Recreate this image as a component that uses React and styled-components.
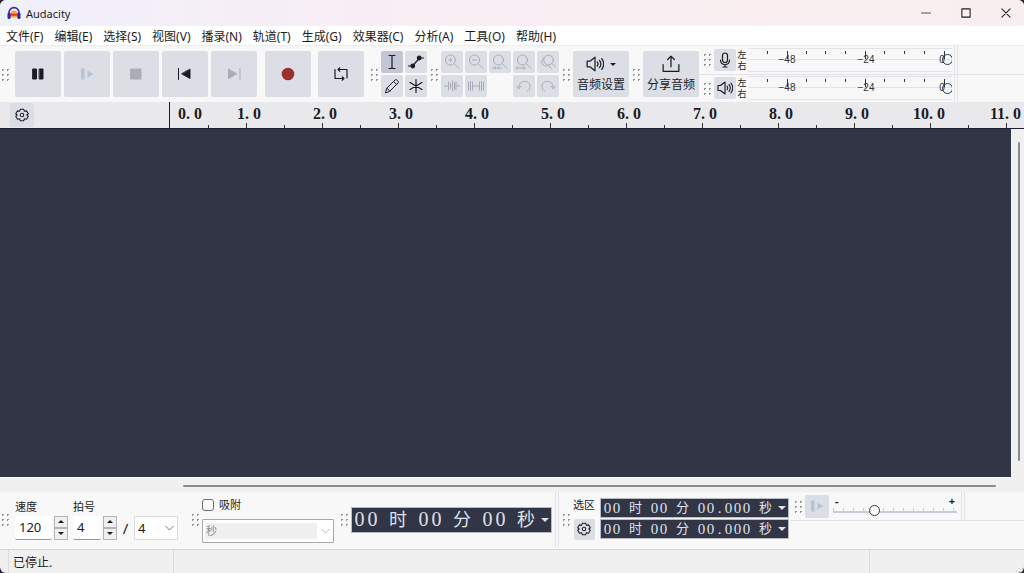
import { useState } from "react"
import styled, { createGlobalStyle, css } from "styled-components"

const GlobalStyle = createGlobalStyle`
  * { box-sizing: border-box; }
  body {
    margin: 0;
    background: #2b2433;
    color: #1c1c1c;
    font-family: "Noto Sans", "Noto Sans CJK SC", sans-serif;
    font-size: 12px;
  }
  button, input, select {
    font: inherit;
    color: inherit;
    margin: 0;
    padding: 0;
  }
  svg { display: block; flex: none; }
`

const Window = styled.div`
  display: flex;
  flex-direction: column;
  min-height: 100vh;
  border-radius: 6px;
  overflow: hidden;
  background: #f0f0f0;
`

const TitleBar = styled.header`
  display: flex;
  align-items: center;
  height: 26px;
  padding: 0 12px 0 7px;
  background: linear-gradient(90deg, #f0f0fa, #f7eef6 30%, #faeef0 75%, #f8eef0);
`

const Title = styled.h1`
  flex: 1;
  margin: 0 0 0 5px;
  font-size: 11px;
  font-weight: normal;
`

const WindowButtons = styled.div`
  display: flex;
  gap: 28px;
`

const PlainButton = styled.button`
  display: flex;
  align-items: center;
  justify-content: center;
  border: 0;
  background: none;
`

const MenuBar = styled.nav`
  display: flex;
  gap: 11px;
  height: 19px;
  padding-left: 6px;
  background: #ffffff;
  line-height: 22px;
`

const MenuLink = styled.a`
  color: #1c1c1c;
  text-decoration: none;
  white-space: nowrap;
`

const Toolbar = styled.div`
  display: flex;
  height: 57px;
  background: #f8f8f9;
  border-top: 1px solid #ececee;
`

const Group = styled.div`
  display: flex;
  align-items: center;
  gap: ${(p) => p.$gap || 0}px;
  margin-right: ${(p) => p.$after || 0}px;
`

const Grip = styled.span`
  flex: none;
  align-self: center;
  width: 10px;
  height: 15px;
  margin: ${(p) => (p.$edge ? "0 5px 0 0" : "0 2px")};
  background: radial-gradient(circle, #8f9199 1px, transparent 1px) 0 0 / 5px 5px;
`

const ToolButton = styled.button`
  display: flex;
  flex-direction: column;
  align-items: center;
  justify-content: center;
  gap: 4px;
  flex: none;
  width: ${(p) => p.$w || 22}px;
  height: ${(p) => p.$h || 22}px;
  border: 0;
  border-radius: 2px;
  background: ${(p) => (p.$active ? "#c3c6d4" : "#dcdee5")};
  color: ${(p) => (p.disabled ? "#a9abb6" : "#1c1c24")};
  line-height: 16px;
`

const ToolGrid = styled.div`
  display: grid;
  grid-template-columns: repeat(${(p) => p.$cols}, 22px);
  gap: 2px;
  align-content: center;
`

const Meters = styled.div`
  flex: 1;
  display: flex;
  flex-direction: column;
`

const MeterRow = styled.div`
  display: flex;
  align-items: center;
  flex: 1;
  padding-left: 1px;
  & + & {
    border-top: 1px solid #e2e3e8;
  }
`

const Channels = styled.span`
  width: 12px;
  text-align: center;
  font-size: 9px;
  line-height: 11px;
`

const MeterEnd = styled.span`
  align-self: stretch;
  width: 4px;
  margin-left: 2px;
  border: 1px solid #e2e3e8;
  border-width: 0 1px;
`

const MeterBox = styled.div`
  position: relative;
  width: 204px;
  height: 24px;
  overflow: hidden;
`

const round = css`
  appearance: none;
  width: 11px;
  height: 11px;
  border: 1px solid #33353d;
  border-radius: 50%;
`

const MeterSlider = styled.input`
  position: absolute;
  inset: 0 -1px 0 auto;
  width: 100%;
  appearance: none;
  background: transparent;
  &::-webkit-slider-thumb {
    ${round}
    background: transparent;
  }
`

const RulerRow = styled.div`
  display: flex;
  height: 27px;
  background: #e9e9ec;
  border-bottom: 1px solid #1d2030;
`

const RulerHead = styled.div`
  flex: none;
  display: flex;
  align-items: center;
  width: 170px;
  padding-left: 10px;
  border-right: 1px solid #1c1c24;
`

const Ruler = styled.div`
  flex: 1;
  display: flex;
  overflow: hidden;
  font: bold 16px/24px "Liberation Serif", serif;
`

const Second = styled.div`
  flex: 0 0 ${(p) => (p.$first ? 38 : 76)}px;
  padding-left: ${(p) => (p.$first ? 0 : 21)}px;
  background: ${(p) =>
    p.$first
      ? "none"
      : "linear-gradient(#333, #333) 0 100% / 1px 3px no-repeat, linear-gradient(#333, #333) 50% 100% / 1px 5px no-repeat"};
  & > span {
    display: block;
    width: 32px;
    text-align: right;
  }
`

const Dot = styled.span`
  display: inline-block;
  width: 8px;
  text-align: left;
`

const TrackArea = styled.main`
  flex: 1;
  display: grid;
  grid-template-columns: 1fr 13px;
  grid-template-rows: 1fr 15px;
`

const Canvas = styled.div`
  background: #313545;
`

const ScrollV = styled.div`
  padding: 13px 4px 16px 7px;
  & > div {
    height: 100%;
    background: #8a8a8a;
    border-radius: 1px;
  }
`

const ScrollH = styled.div`
  padding: 7px 15px 6px 183px;
  border-top: 1px solid #fafafa;
  & > div {
    height: 2px;
    background: #8a8a8a;
    border-radius: 1px;
  }
`

const Footer = styled.div`
  display: flex;
  height: 58px;
  padding-bottom: 2px;
  background: #f8f8f9;
  border-bottom: 1px solid #d5d5d8;
`

const Stack = styled.div`
  display: flex;
  flex-direction: column;
  justify-content: center;
  align-items: ${(p) => p.$align || "flex-start"};
  gap: ${(p) => p.$gap || 0}px;
  padding-bottom: ${(p) => p.$lift || 0}px;
`

const FieldLabel = styled.label`
  font-size: 11px;
  line-height: 16px;
  white-space: nowrap;
`

const Row = styled.div`
  display: flex;
  align-items: center;
  gap: 2px;
  height: 24px;
`

const NumberInput = styled.input`
  width: ${(p) => p.$w}px;
  height: 24px;
  padding-left: 4px;
  border: 0;
  border-bottom: 1px solid #9a9a9a;
  border-radius: 2px;
  background: #ffffff;
  font-size: 13px;
`

const Spin = styled.div`
  display: flex;
  flex-direction: column;
  button {
    display: flex;
    align-items: center;
    justify-content: center;
    width: 14px;
    height: 12px;
    border: 1px solid #b4b4b4;
    background: #f0f0f0;
  }
`

const Slash = styled.span`
  width: 13px;
  text-align: center;
  font-size: 15px;
`

const SelectWrap = styled.div`
  display: grid;
  align-items: center;
  width: ${(p) => p.$w}px;
  & > * {
    grid-area: 1 / 1;
  }
  svg {
    justify-self: end;
    margin-right: 4px;
    pointer-events: none;
  }
`

const Select = styled.select`
  appearance: none;
  width: 100%;
  height: 24px;
  padding-left: 3px;
  border: 1px solid ${(p) => (p.disabled ? "#a8a8a8" : "#d9d9d9")};
  border-radius: 1px;
  background: ${(p) =>
    p.disabled ? "linear-gradient(#f0f0f0, #f0f0f0) 2px 50% / 112px 16px no-repeat #fff" : "#fff"};
  color: ${(p) => (p.disabled ? "#8c8c8c" : "#1c1c1c")};
  opacity: 1;
  font-size: ${(p) => (p.disabled ? 11 : 13)}px;
`

const Check = styled.input`
  appearance: none;
  width: 12px;
  height: 12px;
  border: 1px solid #6c6c6c;
  border-radius: 3px;
  background: #fbfbfb;
`

const TimeBox = styled.div`
  display: flex;
  align-items: center;
  padding: 0 2px 0 ${(p) => (p.$big ? 1 : 2)}px;
  height: ${(p) => (p.$big ? 26 : 20)}px;
  border: 1px solid #b9bcc4;
  background: #313545;
  color: #dfe2ea;
  font: ${(p) => (p.$big ? 20 : 15)}px "Liberation Serif", "Noto Sans CJK SC", serif;
`

const Digit = styled.span`
  width: ${(p) => (p.$big ? 13 : 9)}px;
  text-align: center;
`

const Unit = styled.span`
  width: ${(p) => (p.$big ? 18 : 13)}px;
  margin: 0 ${(p) => (p.$big ? 10 : 8)}px;
  font-size: ${(p) => (p.$big ? 18 : 13)}px;
  line-height: 18px;
  &:last-of-type {
    margin-right: 6px;
  }
`

const Divider = styled.span`
  align-self: stretch;
  width: 4px;
  border: 1px solid #e2e3e8;
  border-width: 0 1px;
`

const Gap = styled.span`
  width: ${(p) => p.$w || 4}px;
`

const SpeedPane = styled.div`
  flex: 1;
  display: flex;
  align-self: flex-start;
  align-items: center;
  height: 29px;
  border-bottom: 1px solid #e0e0e4;
`

const SpeedSlider = styled.div`
  width: 124px;
  margin: 0 4px;
`

const Signs = styled.div`
  display: flex;
  justify-content: space-between;
  padding: 0 2px;
  font-size: 11px;
  font-weight: bold;
  line-height: 8px;
`

const Range = styled.input`
  display: block;
  appearance: none;
  width: 100%;
  height: 11px;
  background:
    linear-gradient(#c6cbda, #c6cbda) 0 6px / 100% 2px no-repeat,
    repeating-linear-gradient(90deg, #c6cbda 0 1px, transparent 1px 10px) 0 3px / 100% 4px no-repeat;
  &::-webkit-slider-thumb {
    ${round}
    background: #ffffff;
  }
`

const StatusBar = styled.footer`
  display: flex;
  height: 23px;
  line-height: 25px;
  padding-left: 8px;
`

const StatusCell = styled.span`
  width: ${(p) => p.$w}px;
  flex: ${(p) => (p.$grow ? 1 : "none")};
  padding-left: 4px;
  border-left: 1px solid #dcdcdc;
`

const SizeGrip = styled.span`
  align-self: flex-end;
  width: 9px;
  height: 9px;
  margin-left: auto;
  background: radial-gradient(circle, #b0b0b0 1px, transparent 1px) 0 0 / 3px 3px;
  clip-path: polygon(100% 0, 100% 100%, 0 100%);
`

const Line = ({ size = 16, w = 1, children }) => (
  <svg width={size} height={size} viewBox="0 0 16 16" fill="none" stroke="currentColor"
    strokeWidth={w} strokeLinecap="round" strokeLinejoin="round">
    {children}
  </svg>
)

const Logo = () => (
  <svg width="14" height="14" viewBox="0 0 14 14">
    <path d="M3 8 4.500 5.500 6 4.500h2l1.500 1L11 8v2l-1.500 1.500h-5L3 10z" fill="#f9a13a" />
    <path d="M3.500 8.800h7" stroke="#e2381e" strokeWidth="2" />
    <path d="M2 8C1 -0.5 13 -0.5 12 8" fill="none" stroke="#3a2fa0" strokeWidth="1.7" />
    <rect x="0.5" y="6.5" width="3.2" height="6.5" rx="1.5" fill="#2f26a8" />
    <rect x="10.3" y="6.5" width="3.2" height="6.5" rx="1.5" fill="#2f26a8" />
  </svg>
)

const PauseIcon = () => <Line><path d="M3 3h3.500v10H3zM9.500 3H13v10H9.500z" fill="currentColor" /></Line>

const PlayIcon = () => (
  <svg width="16" height="16" viewBox="0 0 16 16" fill="#b4c5d6">
    <rect x="2" y="2.5" width="3.5" height="11" rx="0.5" />
    <path d="M8.500 4.500 14.500 8 8.500 11.500z" />
  </svg>
)

const StopIcon = () => <Line><path d="M3 3h10v10H3z" fill="currentColor" /></Line>
const StartIcon = () => <Line><path d="M1.500 2.500v11" /><path d="M13 3.500v9L5 8z" fill="currentColor" /></Line>
const EndIcon = () => <Line><path d="M14 2.500v11" /><path d="M2.500 3.500v9l8-4.500z" fill="currentColor" /></Line>

const RecordIcon = () => (
  <svg width="14" height="14" viewBox="0 0 14 14"><circle cx="7" cy="7" r="6.3" fill="#9c302c" /></svg>
)

const LoopIcon = () => (
  <Line w={1.2}>
    <path d="M2 3.500v9h9M9.200 10.800l1.800 1.700-1.800 1.700M14 12V3.500H5M6.800 1.800 5 3.500l1.800 1.700" />
  </Line>
)

const SelectIcon = () => <Line w={1.2}><path d="M5 1.500h6M8 1.500v13M5 14.500h6" /></Line>

const EnvelopeIcon = () => (
  <Line w={1.2}>
    <path d="M0 12h4.500L11.500 4H16" />
    <circle cx="4.8" cy="12" r="1.8" fill="currentColor" />
    <circle cx="11.2" cy="4" r="1.8" fill="currentColor" />
  </Line>
)

const DrawIcon = () => (
  <Line><path d="M1.500 14.500 2.800 10.200 11 2c1.400-1.300 4.300 1.500 3 3l-8.200 8.200zM2.800 10.200l3 3M9.600 3.400l3 3" /></Line>
)

const MultiIcon = () => <Line w={1.2}><path d="M8 1.500v13M2 4.500l12 7M14 4.500l-12 7" /></Line>

const Lens = ({ children }) => (
  <Line><circle cx="6.5" cy="6" r="5" /><path d="m10.200 9.700 4.500 4.500" />{children}</Line>
)

const ZoomInIcon = () => <Lens><path d="M5 6h3M6.500 4.500v3" /></Lens>
const ZoomOutIcon = () => <Lens><path d="M4.500 6h4" /></Lens>
const ZoomSelIcon = () => <Lens><path d="M0 14h4M2.800 12.800 4 14l-1.200 1.200M9.500 14h-4M6.700 12.800 5.500 14l1.200 1.200" /></Lens>
const ZoomFitIcon = () => <Lens><path d="M0 14h9M1.200 12.800 0 14l1.200 1.200M7.800 12.800 9 14l-1.200 1.200" /></Lens>
const ZoomToggleIcon = () => (
  <Line><circle cx="8.5" cy="6" r="4.8" /><path d="m12 9.500 3.500 3.500M4 3.500C-1 7 3 14 8.500 11.500l3 3" /></Line>
)

const TrimIcon = () => (
  <Line><path d="M0 8h4.500M12 8h4M4.500 4v8M6.500 5.500v5M8.500 3v10M10.500 4.500v7M12 4v8" /></Line>
)
const SilenceIcon = () => (
  <Line><path d="M.5 4v8M2.500 3.500v9M4.500 4v8M4.500 8h7M11.500 4v8M13.500 3.500v9M15.500 4v8" /></Line>
)
const UndoIcon = () => <Line><path d="M3 10.500C1.500 1.500 14 1 14 8.500c0 2-1 3.500-2.500 4.500M.8 8.300 3 10.500l2.200-2.200" /></Line>
const RedoIcon = () => <Line><path d="M13 10.500C14.500 1.500 2 1 2 8.500c0 2 1 3.500 2.500 4.500M15.200 8.300 13 10.500l-2.200-2.200" /></Line>

const SpeakerIcon = ({ size = 16 }) => (
  <Line size={size} w={1.1}>
    <path d="M1 5.500h2.500L8 2v12l-4.500-3.500H1zM10 6.200q1.300 1.800 0 3.600M12 4.700q2.500 3.300 0 6.600M14 3.200q3.400 4.800 0 9.600" />
  </Line>
)

const ShareIcon = () => <Line size={18} w={1.1}><path d="M1 8.500v6h14v-6M8 10.500V1M5 4l3-3 3 3" /></Line>

const MicIcon = () => (
  <Line w={1.2}>
    <rect x="5.5" y="1" width="5" height="9.5" rx="2.5" />
    <path d="M3.500 8c0 6 9 6 9 0M8 12.500V15M6 15h4" />
  </Line>
)

const GearIcon = () => (
  <Line size={14} w={1.2}>
    <path d="M6 1.500h4l.7 2.300 2.500-.5 2 3.300L13.500 8l1.700 1.500-2 3.300-2.500-.5L10 14.500H6l-.7-2.200-2.500.5-2-3.300L2.500 8 .8 6.600l2-3.300 2.500.5z" />
    <circle cx="8" cy="8" r="2" />
  </Line>
)

const Chevron = ({ color = "#777" }) => (
  <svg width="9" height="6" viewBox="0 0 9 6" fill="none" stroke={color}><path d="M.5 1 4.500 5 8.500 1" /></svg>
)

const Triangle = ({ up, w = 6 }) => (
  <svg width={w} height={w / 2} viewBox="0 0 6 3" fill="currentColor"><path d={up ? "M0 3h6L3 0z" : "M0 0h6L3 3z"} /></svg>
)

const menus = ["文件(F)", "编辑(E)", "选择(S)", "视图(V)", "播录(N)", "轨道(T)", "生成(G)", "效果器(C)", "分析(A)", "工具(O)", "帮助(H)"]

const tools = [
  { name: "选择", Icon: SelectIcon },
  { name: "包络", Icon: EnvelopeIcon },
  { name: "绘制", Icon: DrawIcon },
  { name: "多功能", Icon: MultiIcon },
]

const edits = [
  { name: "放大", Icon: ZoomInIcon },
  { name: "缩小", Icon: ZoomOutIcon },
  { name: "缩放至选区", Icon: ZoomSelIcon },
  { name: "适应宽度", Icon: ZoomFitIcon },
  { name: "缩放切换", Icon: ZoomToggleIcon },
  { name: "修剪", Icon: TrimIcon },
  { name: "静音", Icon: SilenceIcon },
  { name: "" },
  { name: "撤销", Icon: UndoIcon },
  { name: "重做", Icon: RedoIcon },
]

const Meter = ({ name }) => {
  const [level, setLevel] = useState(100)
  return (
    <MeterBox>
      <svg width="204" height="24" fontFamily="Liberation Sans, sans-serif" fontSize="10" fill="#33353d">
        <path d="M0 .5h204M0 11.500h204M0 23.500h204" stroke="#e2e3e8" />
        {[20, 59, 78, 98, 137, 157, 177].map((x) => <rect key={x} x={x - 1} y="3" width="1" height="3" />)}
        {[40, 118, 197].map((x) => <rect key={x} x={x - 1} y="3" width="1" height="8" />)}
        <text x="39" y="15" textAnchor="middle">−48</text>
        <text x="118" y="15" textAnchor="middle">−24</text>
        <text x="194" y="15" textAnchor="middle">0</text>
      </svg>
      <MeterSlider type="range" aria-label={name} value={level} onChange={(e) => setLevel(e.target.value)} />
    </MeterBox>
  )
}

const Label = ({ n }) => (
  <span>{n}<Dot>.</Dot>0</span>
)

const Time = ({ value, big, name }) => (
  <TimeBox $big={big} role="group" aria-label={name}>
    {[...value].map((c, i) =>
      /[\d.]/.test(c) ? <Digit key={i} $big={big}>{c}</Digit> : <Unit key={i} $big={big}>{c}</Unit>
    )}
    <PlainButton aria-label={name}><Triangle w={8} /></PlainButton>
  </TimeBox>
)

const Spinner = ({ name }) => (
  <Spin>
    <button aria-label={name + " +"}><Triangle up /></button>
    <button aria-label={name + " -"}><Triangle /></button>
  </Spin>
)

const App = () => {
  const [tempo, setTempo] = useState("120")
  const [beats, setBeats] = useState("4")
  const [snap, setSnap] = useState(false)
  const [speed, setSpeed] = useState(32)
  const [tool, setTool] = useState("选择")

  return (
    <>
      <GlobalStyle />
      <Window>
        <TitleBar>
          <Logo />
          <Title>Audacity</Title>
          <WindowButtons>
            <PlainButton aria-label="最小化"><Line size={12}><path d="M2 8h12" /></Line></PlainButton>
            <PlainButton aria-label="最大化"><Line size={12} w={1.4}><path d="M2.500 2.500h11v11h-11z" /></Line></PlainButton>
            <PlainButton aria-label="关闭"><Line size={12} w={1.4}><path d="m2.500 2.500 11 11M13.500 2.500l-11 11" /></Line></PlainButton>
          </WindowButtons>
        </TitleBar>

        <MenuBar>
          {menus.map((m) => <MenuLink key={m} href="#">{m}</MenuLink>)}
        </MenuBar>

        <Toolbar>
          <Grip $edge />
          <Group $gap={3} $after={8}>
            <ToolButton $w={46} $h={46} aria-label="暂停"><PauseIcon /></ToolButton>
            <ToolButton $w={46} $h={46} aria-label="播放" disabled><PlayIcon /></ToolButton>
            <ToolButton $w={46} $h={46} aria-label="停止" disabled><StopIcon /></ToolButton>
            <ToolButton $w={46} $h={46} aria-label="跳至开始"><StartIcon /></ToolButton>
            <ToolButton $w={46} $h={46} aria-label="跳至结尾" disabled><EndIcon /></ToolButton>
          </Group>
          <Group $gap={7} $after={3}>
            <ToolButton $w={46} $h={46} aria-label="录制"><RecordIcon /></ToolButton>
            <ToolButton $w={46} $h={46} aria-label="循环"><LoopIcon /></ToolButton>
          </Group>
          <Grip />
          <ToolGrid $cols={2}>
            {tools.map(({ name, Icon }) => (
              <ToolButton key={name} aria-label={name} $active={tool === name} onClick={() => setTool(name)}><Icon /></ToolButton>
            ))}
          </ToolGrid>
          <Grip />
          <ToolGrid $cols={5}>
            {edits.map(({ name, Icon }) =>
              Icon ? <ToolButton key={name} aria-label={name} disabled><Icon /></ToolButton> : <span key="blank" />
            )}
          </ToolGrid>
          <Grip />
          <Group>
            <ToolButton $w={56} $h={46}>
              <Group $gap={6}><SpeakerIcon size={18} /><Triangle /></Group>
              音频设置
            </ToolButton>
          </Group>
          <Grip />
          <Group>
            <ToolButton $w={56} $h={46}><ShareIcon />分享音频</ToolButton>
          </Group>
          <Meters>
            {["录制电平", "播放电平"].map((name, i) => (
              <MeterRow key={name}>
                <Grip />
                <ToolButton aria-label={name}>{i === 0 ? <MicIcon /> : <SpeakerIcon />}</ToolButton>
                <Channels>左<br />右</Channels>
                <Meter name={name} />
                <MeterEnd />
              </MeterRow>
            ))}
          </Meters>
        </Toolbar>

        <RulerRow>
          <RulerHead>
            <ToolButton $w={24} $h={24} aria-label="时间轴选项"><GearIcon /></ToolButton>
          </RulerHead>
          <Ruler>
            <Second $first><Label n={0} /></Second>
            {[1, 2, 3, 4, 5, 6, 7, 8, 9, 10, 11].map((n) => <Second key={n}><Label n={n} /></Second>)}
          </Ruler>
        </RulerRow>

        <TrackArea>
          <Canvas />
          <ScrollV><div /></ScrollV>
          <ScrollH><div /></ScrollH>
        </TrackArea>

        <Footer>
          <Grip $edge />
          <Group $gap={5} $after={10}>
            <Stack $gap={1} $lift={1}>
              <FieldLabel htmlFor="tempo">速度</FieldLabel>
              <Row>
                <NumberInput id="tempo" $w={37} value={tempo} onChange={(e) => setTempo(e.target.value)} />
                <Spinner name="速度" />
              </Row>
            </Stack>
            <Stack $gap={1} $lift={1}>
              <FieldLabel htmlFor="beats">拍号</FieldLabel>
              <Row>
                <NumberInput id="beats" $w={28} value={beats} onChange={(e) => setBeats(e.target.value)} />
                <Spinner name="拍号" />
                <Slash>/</Slash>
                <SelectWrap $w={44}>
                  <Select aria-label="拍号" defaultValue="4"><option>2</option><option>4</option><option>8</option></Select>
                  <Chevron />
                </SelectWrap>
              </Row>
            </Stack>
          </Group>
          <Grip />
          <Stack $gap={6}>
            <Group $gap={5}>
              <Check type="checkbox" id="snap" checked={snap} onChange={(e) => setSnap(e.target.checked)} />
              <FieldLabel htmlFor="snap">吸附</FieldLabel>
            </Group>
            <SelectWrap $w={132}>
              <Select aria-label="吸附" disabled={!snap}><option>秒</option></Select>
              <Chevron color="#bbb" />
            </SelectWrap>
          </Stack>
          <Gap $w={3} />
          <Grip />
          <Stack><Time big value="00时00分00秒" name="时间" /></Stack>
          <Gap $w={3} />
          <Divider />
          <Grip />
          <Stack $gap={6} $align="center" $lift={3}>
            <FieldLabel as="span">选区</FieldLabel>
            <ToolButton $w={21} $h={21} aria-label="选区"><GearIcon /></ToolButton>
          </Stack>
          <Gap $w={5} />
          <Stack $gap={1} $lift={2}>
            <Time value="00时00分00.000秒" name="选区开始" />
            <Time value="00时00分00.000秒" name="选区结束" />
          </Stack>
          <Gap $w={2} />
          <SpeedPane>
            <Grip />
            <ToolButton $w={24} $h={23} aria-label="变速播放" disabled><PlayIcon /></ToolButton>
            <SpeedSlider>
              <Signs><span>-</span><span>+</span></Signs>
              <Range type="range" aria-label="播放速度" value={speed} onChange={(e) => setSpeed(e.target.value)} />
            </SpeedSlider>
            <Divider />
          </SpeedPane>
        </Footer>

        <StatusBar>
          <StatusCell $w={165}>已停止.</StatusCell>
          <StatusCell $grow />
          <StatusCell $w={146} />
          <SizeGrip />
        </StatusBar>
      </Window>
    </>
  )
}

export default App
